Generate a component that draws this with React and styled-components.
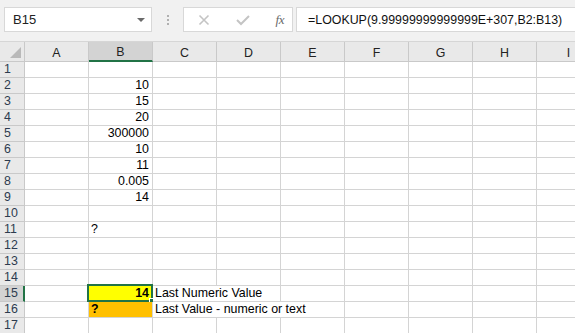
import React from 'react'
import styled, { createGlobalStyle } from 'styled-components'

const GlobalStyle = createGlobalStyle`
  html, body {
    margin: 0;
    padding: 0;
    background: #ffffff;
    overflow: hidden;
  }
  * { box-sizing: border-box; }
`

const Window = styled.div`
  width: 575px;
  height: 333px;
  display: flex;
  flex-direction: column;
  font-family: "Liberation Sans", Arial, sans-serif;
  background: #ffffff;
  overflow: hidden;
`

const FormulaBar = styled.div`
  height: 42px;
  flex: none;
  display: flex;
  align-items: flex-start;
  padding: 7px 0 0 4px;
  background: #f1f1f1;
  border-bottom: 1px solid #d6d6d6;
`

const NameBox = styled.div`
  width: 148px;
  height: 25px;
  display: flex;
  align-items: center;
  justify-content: space-between;
  padding: 0 6px 0 8px;
  background: #ffffff;
  border: 1px solid #d8d8d8;
  font-size: 13px;
  color: #222;
`

const Arrow = styled.span`
  width: 0;
  height: 0;
  border-left: 4px solid transparent;
  border-right: 4px solid transparent;
  border-top: 4px solid #6a6a6a;
  margin-top: 1px;
`

const Grip = styled.div`
  width: 31px;
  height: 25px;
  display: flex;
  flex-direction: column;
  align-items: center;
  justify-content: center;
  gap: 2px;
  span {
    width: 2px;
    height: 2px;
    background: #b0b0b0;
  }
`

const FxBox = styled.div`
  width: 110px;
  height: 25px;
  display: flex;
  align-items: center;
  justify-content: space-between;
  padding: 0 8px 0 14px;
  background: #ffffff;
  border: 1px solid #d8d8d8;
  color: #c0c0c0;
`

const Fx = styled.span`
  font-family: "Liberation Serif", "Times New Roman", serif;
  font-style: italic;
  font-size: 13px;
  color: #6a6a6a;
  letter-spacing: -0.5px;
`

const FormulaInput = styled.div`
  flex: 1;
  height: 25px;
  margin-left: 3px;
  display: flex;
  align-items: center;
  padding-left: 11px;
  background: #ffffff;
  border: 1px solid #d8d8d8;
  border-right: none;
  font-size: 12.4px;
  color: #111;
  white-space: nowrap;
`

const Sheet = styled.div`
  display: grid;
  grid-template-columns: 25px repeat(9, 64px);
  grid-template-rows: 20px repeat(17, 16px);
  font-size: 12.4px;
`

const Corner = styled.div`
  position: relative;
  background: #e9e9e9;
  border-right: 1px solid #c9c9c9;
  border-bottom: 1px solid #c9c9c9;
  &::after {
    content: '';
    position: absolute;
    right: 3px;
    bottom: 3px;
    width: 0;
    height: 0;
    border-left: 11px solid transparent;
    border-bottom: 11px solid #b9b9b9;
  }
`

const ColHead = styled.div`
  display: flex;
  align-items: center;
  justify-content: center;
  padding-top: 2px;
  color: #222;
  background: ${({ $active }) => ($active ? '#d3d3d3' : '#e9e9e9')};
  border-right: 1px solid #c9c9c9;
  border-bottom: ${({ $active }) => ($active ? '2px solid #217346' : '1px solid #c9c9c9')};
`

const RowHead = styled.div`
  display: flex;
  align-items: flex-end;
  padding: 0 0 1px 4px;
  line-height: 14px;
  color: #2d3b4f;
  background: ${({ $active }) => ($active ? '#d3d3d3' : '#e9e9e9')};
  border-right: ${({ $active }) => ($active ? '2px solid #217346' : '1px solid #c9c9c9')};
  border-bottom: 1px solid #c9c9c9;
`

const Cell = styled.div`
  position: relative;
  display: flex;
  align-items: flex-end;
  justify-content: ${({ $right }) => ($right ? 'flex-end' : 'flex-start')};
  padding: 0 3px 1px 2px;
  line-height: 14px;
  white-space: nowrap;
  color: #000;
  font-weight: ${({ $bold }) => ($bold ? 700 : 400)};
  background: ${({ $fill }) => $fill || '#ffffff'};
  border-right: 1px solid #d4d4d4;
  border-bottom: 1px solid #d4d4d4;
  grid-column: ${({ $span }) => ($span ? `span ${$span}` : 'auto')};
`

const Selected = styled(Cell)`
  &::before {
    content: '';
    position: absolute;
    left: -2px;
    top: -2px;
    right: -1px;
    bottom: -1px;
    border: 2px solid #217346;
    pointer-events: none;
  }
  &::after {
    content: '';
    position: absolute;
    right: -4px;
    bottom: -4px;
    width: 5px;
    height: 5px;
    background: #217346;
    border: 1px solid #ffffff;
  }
`

const columns = ['A', 'B', 'C', 'D', 'E', 'F', 'G', 'H', 'I']

const values = {
  2: '10', 3: '15', 4: '20', 5: '300000', 6: '10',
  7: '11', 8: '0.005', 9: '14'
}

// labels in column C overflow into the cells to their right
const labels = {
  15: { text: 'Last Numeric Value', span: 2 },
  16: { text: 'Last Value - numeric or text', span: 3 }
}

const Cross = () => (
  <svg width="12" height="12" viewBox="0 0 12 12">
    <path d="M1.5 1.5 L10.5 10.5 M10.5 1.5 L1.5 10.5" stroke="#c4c4c4" strokeWidth="1.6" fill="none" />
  </svg>
)

const Check = () => (
  <svg width="14" height="12" viewBox="0 0 14 12">
    <path d="M1 6 L5 10 L13 2" stroke="#c4c4c4" strokeWidth="2" fill="none" />
  </svg>
)

const renderRow = (r) => {
  const cells = [<RowHead key={`h${r}`} $active={r === 15}>{r}</RowHead>]
  const label = labels[r]
  columns.forEach((c, i) => {
    const key = `${c}${r}`
    if (c === 'B') {
      if (values[r]) cells.push(<Cell key={key} $right>{values[r]}</Cell>)
      else if (r === 11) cells.push(<Cell key={key}>?</Cell>)
      else if (r === 15) cells.push(<Selected key={key} $right $bold $fill="#ffff00">14</Selected>)
      else if (r === 16) cells.push(<Cell key={key} $bold $fill="#ffc000">?</Cell>)
      else cells.push(<Cell key={key} />)
    } else if (c === 'C' && label) {
      cells.push(<Cell key={key} $span={label.span}>{label.text}</Cell>)
    } else if (label && i > 2 && i < 2 + label.span) {
      // covered by the spanning label
    } else {
      cells.push(<Cell key={key} />)
    }
  })
  return cells
}

const App = () => {
  const rows = Array.from({ length: 17 }, (_, i) => i + 1)
  return (
    <Window>
      <GlobalStyle />
      <FormulaBar>
        <NameBox>
          B15
          <Arrow />
        </NameBox>
        <Grip><span /><span /><span /></Grip>
        <FxBox>
          <Cross />
          <Check />
          <Fx>fx</Fx>
        </FxBox>
        <FormulaInput>=LOOKUP(9.99999999999999E+307,B2:B13)</FormulaInput>
      </FormulaBar>
      <Sheet>
        <Corner />
        {columns.map((c) => (
          <ColHead key={c} $active={c === 'B'}>{c}</ColHead>
        ))}
        {rows.map(renderRow)}
      </Sheet>
    </Window>
  )
}

export default App
